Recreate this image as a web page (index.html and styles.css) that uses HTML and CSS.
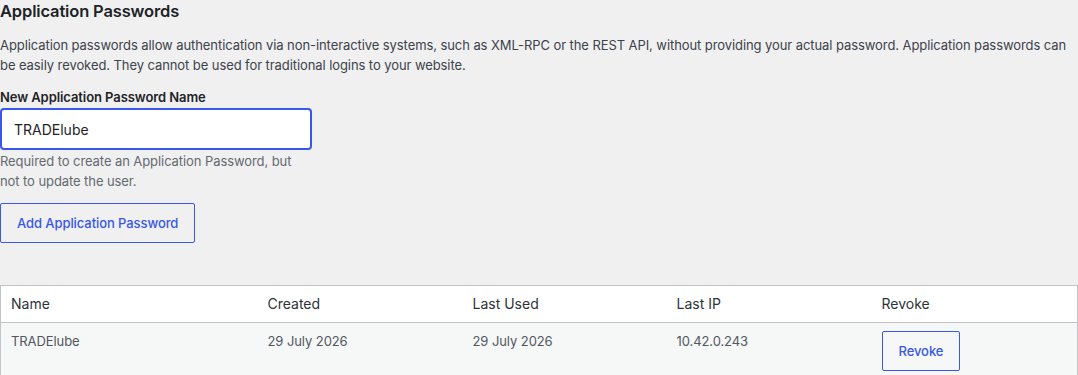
FILE: index.html
```html
<!DOCTYPE html>
<html lang="en">
<head>
<meta charset="utf-8">
<title>Application Passwords</title>
<link rel="stylesheet" href="styles.css">
</head>
<body>
<section class="app-passwords">
  <h2 class="title">Application Passwords</h2>
  <p class="intro">Application passwords allow authentication via non-interactive systems, such as XML-RPC or the REST API, without providing your actual password. Application passwords can be easily revoked. They cannot be used for traditional logins to your website.</p>

  <div class="field">
    <label class="field-label" for="app-name">New Application Password Name</label>
    <input class="field-input" id="app-name" type="text" value="TRADElube">
    <p class="field-help">Required to create an Application Password, but not to update the user.</p>
  </div>

  <button class="btn btn-add" type="button">Add Application Password</button>

  <table class="pw-table">
    <colgroup>
      <col class="col-name">
      <col class="col-created">
      <col class="col-used">
      <col class="col-ip">
      <col class="col-revoke">
    </colgroup>
    <thead>
      <tr>
        <th>Name</th>
        <th>Created</th>
        <th>Last Used</th>
        <th>Last IP</th>
        <th>Revoke</th>
      </tr>
    </thead>
    <tbody>
      <tr>
        <td>TRADElube</td>
        <td>29 July 2026</td>
        <td>29 July 2026</td>
        <td>10.42.0.243</td>
        <td><button class="btn btn-revoke" type="button">Revoke</button></td>
      </tr>
    </tbody>
  </table>
</section>
</body>
</html>
```

FILE: styles.css
```css
html, body {
  margin: 0;
  padding: 0;
  background: #f0f0f1;
}

body {
  font-family: Inter, "Noto Sans", "Liberation Sans", sans-serif;
  font-size: 13px;
  letter-spacing: -0.08px;
  color: #3c434a;
}

.app-passwords {
  display: flex;
  flex-direction: column;
  align-items: flex-start;
}

.title {
  margin: 0;
  font-size: 16.5px;
  letter-spacing: -0.15px;
  line-height: 22px;
  font-weight: 600;
  color: #1d2327;
}

.intro {
  margin: 14px 0 0;
  line-height: 19.5px;
  color: #3c434a;
}

.field {
  margin-top: 13px;
  width: 312px;
  display: flex;
  flex-direction: column;
}

.field-label {
  font-weight: 600;
  line-height: 19.5px;
  color: #1d2327;
}

.field-input {
  box-sizing: border-box;
  margin: 0.5px 0 0;
  width: 312px;
  height: 42px;
  padding: 0 12px;
  border: 2px solid #3858e9;
  border-radius: 4px;
  background: #fff;
  font-family: inherit;
  font-size: 14px;
  letter-spacing: 0;
  color: #1d2327;
  outline: none;
}

.field-help {
  margin: 1px 0 0;
  line-height: 20px;
  color: #646970;
}

.btn {
  box-sizing: border-box;
  height: 40px;
  padding: 0 16px;
  border: 1px solid #3858e9;
  border-radius: 2px;
  background: transparent;
  color: #3858e9;
  font-family: inherit;
  font-size: 13px;
  letter-spacing: -0.08px;
  font-weight: 500;
  cursor: pointer;
}

.btn-add {
  margin-top: 12px;
}

.pw-table {
  margin-top: 42px;
  width: 100%;
  table-layout: fixed;
  border-collapse: collapse;
  border: 1px solid #c3c4c7;
}

.col-name { width: 257px; }
.col-created { width: 205px; }
.col-used { width: 204px; }
.col-ip { width: 205px; }

.pw-table th,
.pw-table td {
  padding: 8px 10px;
  text-align: left;
  vertical-align: top;
  line-height: 20px;
}

.pw-table thead th {
  background: #fff;
  font-size: 14px;
  letter-spacing: 0;
  font-weight: 400;
  color: #2c3338;
  border-bottom: 1px solid #c3c4c7;
}

.pw-table tbody td {
  background: #f6f7f7;
  color: #50575e;
  font-size: 13px;
}

.btn-revoke {
  display: block;
}
```
